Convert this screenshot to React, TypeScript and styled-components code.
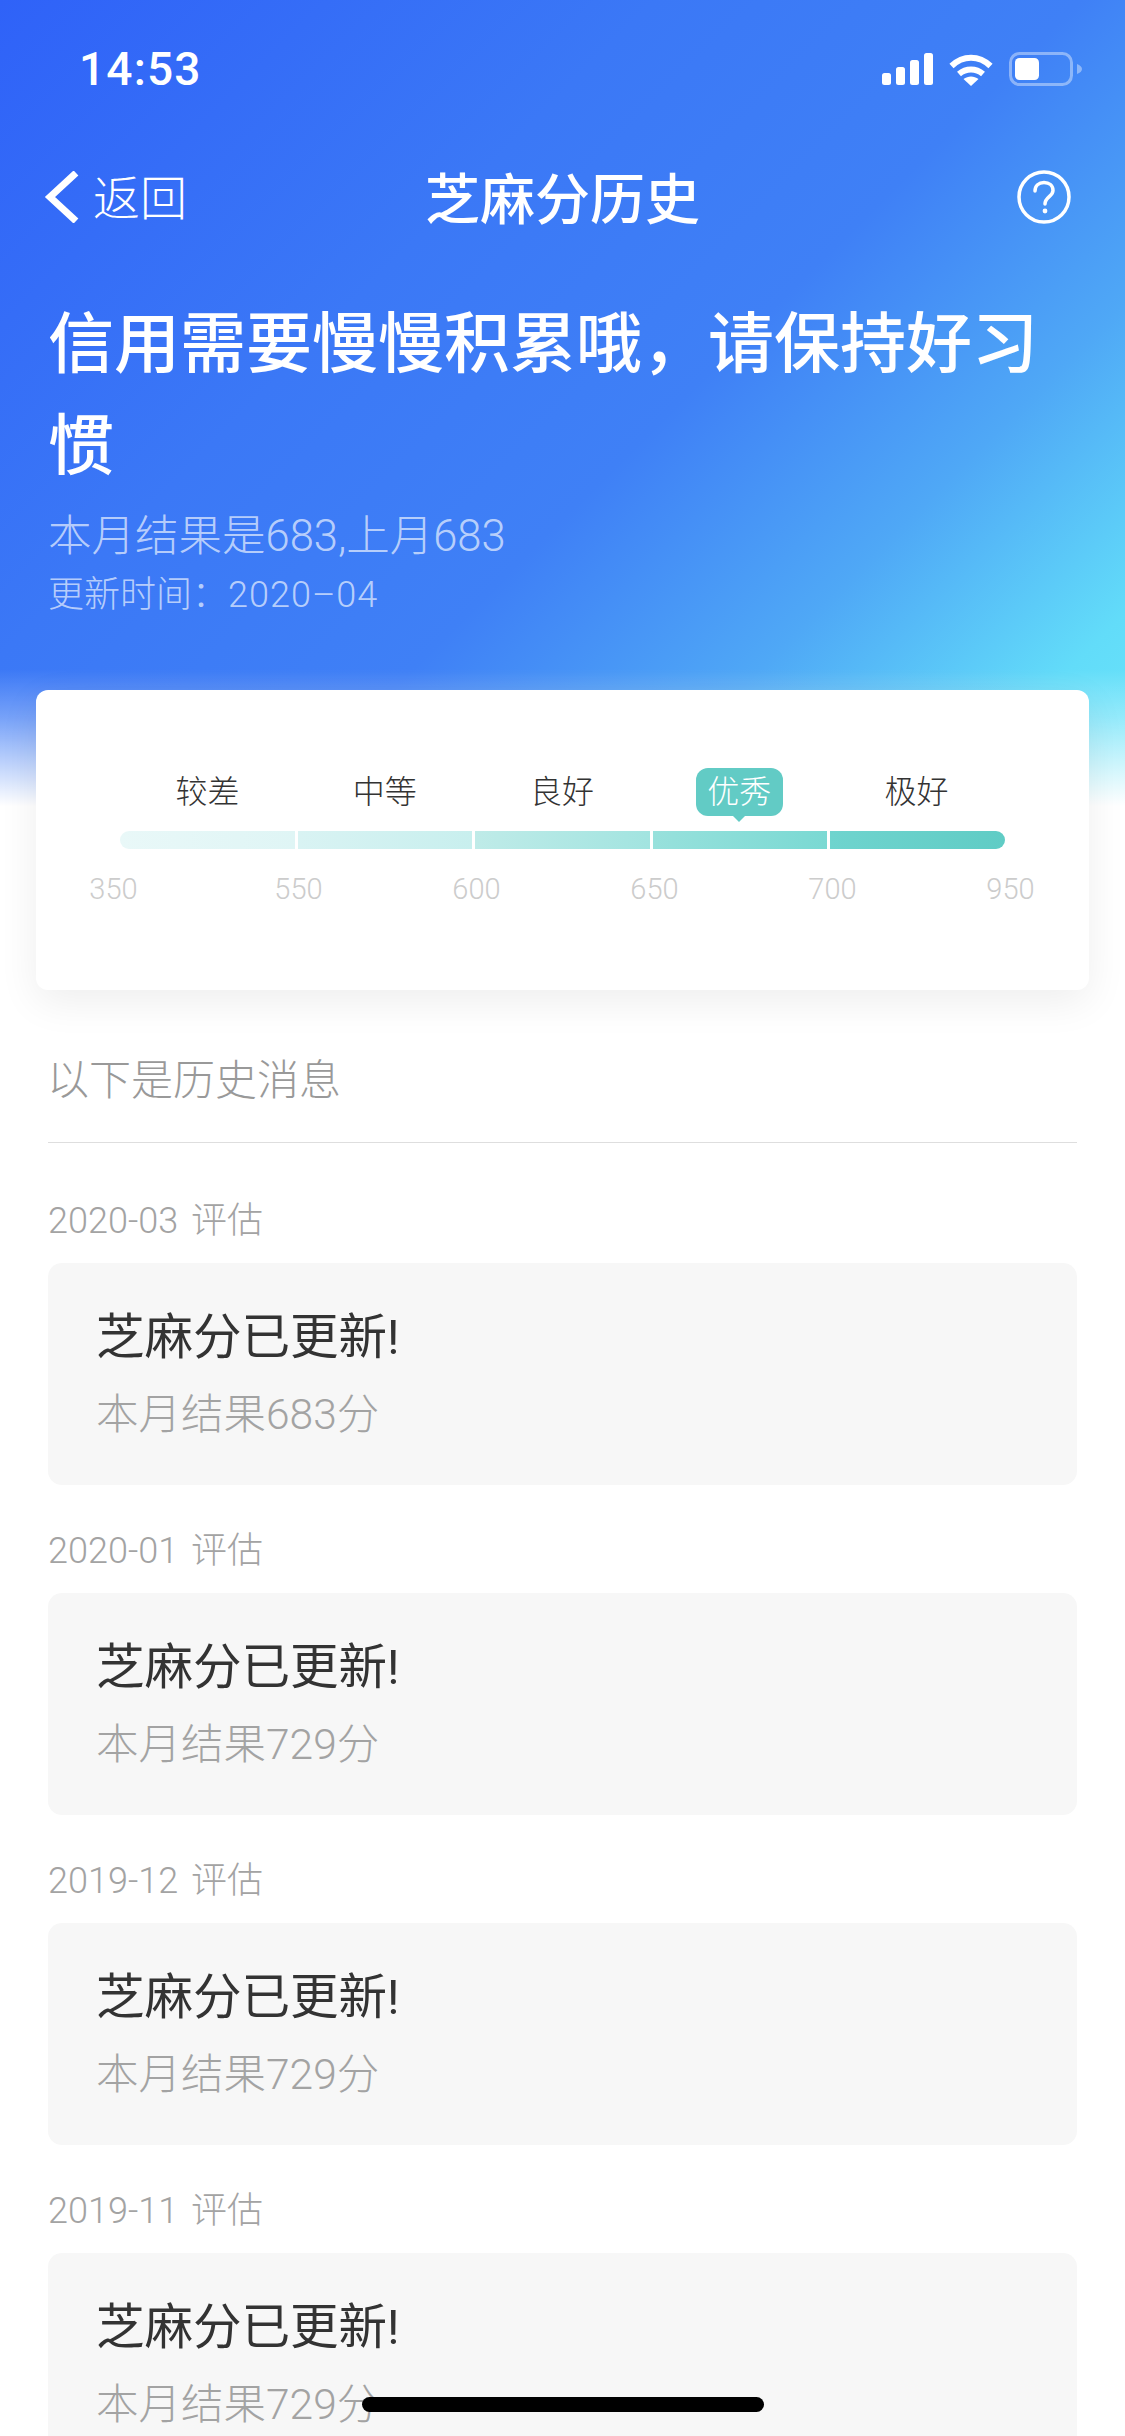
import * as React from "react";
import styled, { createGlobalStyle } from "styled-components";

const GlobalStyle = createGlobalStyle`
  html, body {
    margin: 0;
    padding: 0;
    background: #fff;
  }
  * {
    box-sizing: border-box;
  }
`;

const SPage = styled.div`
  position: relative;
  width: 1125px;
  height: 2436px;
  overflow: hidden;
  background: #fff;
  font-family: Roboto, "Noto Sans CJK SC", sans-serif;
`;

const SHero = styled.header`
  height: 806px;
  color: #fff;
  background:
    linear-gradient(to bottom, rgba(255, 255, 255, 0) 83%, rgba(255, 255, 255, 0.3) 89%, #fff 100%),
    linear-gradient(135deg, #2f62f8 0%, #3b78f6 34%, #3f80f6 56%, #4fa8f6 74%, #62dcf9 90%, #6ae6fa 100%);
`;

const SStatusBar = styled.div`
  height: 136px;
  padding: 46px 43px 0 79px;
  display: flex;
  justify-content: space-between;
  align-items: flex-start;
`;

const STime = styled.div`
  font-size: 46px;
  line-height: 46px;
  font-weight: 500;
  letter-spacing: 1.2px;
`;

const SStatusIcons = styled.div`
  display: flex;
  align-items: center;
  gap: 16px;
  height: 46px;
`;

const SNav = styled.nav`
  height: 122px;
  padding: 0 54px 0 44px;
  display: grid;
  grid-template-columns: 1fr auto 1fr;
  align-items: center;
`;

const SBack = styled.div`
  display: flex;
  align-items: center;
  gap: 13px;
  font-size: 47px;
  font-weight: 300;
`;

const SBackText = styled.span`
  padding-bottom: 5px;
`;

const SNavTitle = styled.div`
  margin-left: 10px;
  padding-bottom: 5px;
  font-size: 55px;
  font-weight: 500;
`;

const SHelp = styled.div`
  display: flex;
  justify-content: flex-end;
`;

const SHeadline = styled.div`
  padding: 36px 48px 0;
`;

const STitle = styled.h1`
  margin: 0;
  font-size: 66px;
  line-height: 102px;
  font-weight: 500;
`;

const SResult = styled.div`
  margin-top: 11px;
  font-size: 43.5px;
  line-height: 56px;
  font-weight: 300;
  color: rgba(255, 255, 255, 0.65);
`;

const SUpdated = styled.div`
  margin-top: 5px;
  font-size: 36px;
  line-height: 50px;
  font-weight: 300;
  color: rgba(255, 255, 255, 0.65);
`;

const SUpdatedDate = styled.span`
  letter-spacing: 1px;
`;

const SScoreCard = styled.section`
  height: 300px;
  margin: -116px 36px 0;
  padding: 78px 84px 0;
  border-radius: 12px;
  background: #fff;
  box-shadow: 0 12px 40px rgba(0, 0, 0, 0.07);
`;

const SLevels = styled.div`
  display: grid;
  grid-template-columns: repeat(5, 1fr);
  margin-left: -1px;
  height: 48px;
  align-items: center;
  justify-items: center;
`;

const SLevel = styled.div<{ $active?: boolean }>`
  position: relative;
  width: 87px;
  height: 48px;
  line-height: 48px;
  text-align: center;
  font-size: 32px;
  font-weight: 300;
  border-radius: 12px;
  color: ${(p) => (p.$active ? "#fff" : "#333")};
  background: ${(p) => (p.$active ? "#62cbc5" : "transparent")};

  ${(p) =>
    p.$active &&
    `
    &::after {
      content: "";
      position: absolute;
      left: 50%;
      bottom: -6px;
      margin-left: -6px;
      border-left: 6px solid transparent;
      border-right: 6px solid transparent;
      border-top: 6px solid #62cbc5;
    }
  `}
`;

const SBar = styled.div`
  display: flex;
  gap: 3px;
  height: 18px;
  margin-top: 15px;
  border-radius: 9px;
  overflow: hidden;
`;

const SSegment = styled.div<{ $from: string; $to: string }>`
  flex: 1;
  background: linear-gradient(to right, ${(p) => p.$from}, ${(p) => p.$to});
`;

const STicks = styled.div`
  display: flex;
  gap: 129px;
  margin: 24px 0 0 -31px;
`;

const STick = styled.div`
  flex: 0 0 49px;
  text-align: center;
  font-size: 29px;
  line-height: 32px;
  font-weight: 300;
  color: #ccc;

  &:first-child {
    margin-right: 7px;
  }
`;

const SHistory = styled.section`
  padding: 0 48px;
`;

const SHistoryTitle = styled.div`
  margin-top: 62px;
  padding: 0 0 32px;
  border-bottom: 1px solid #dedede;
  font-size: 42px;
  line-height: 58px;
  font-weight: 300;
  text-indent: -1px;
  color: #999;
`;

const SGroups = styled.div`
  display: flex;
  flex-direction: column;
  gap: 44px;
  padding-top: 56px;
`;

const SPeriod = styled.div`
  height: 44px;
  margin-bottom: 20px;
  font-size: 36px;
  line-height: 44px;
  font-weight: 300;
  word-spacing: 4px;
  color: #a3a3a3;
`;

const SMessage = styled.div`
  height: 222px;
  padding: 43px 48px 0;
  border-radius: 14px;
  background: #f7f7f7;
`;

const SMessageTitle = styled.div`
  font-size: 48.5px;
  line-height: 64px;
  font-weight: 400;
  color: #333;
`;

const SMessageText = styled.div`
  margin-top: 17px;
  font-size: 42.5px;
  line-height: 56px;
  font-weight: 300;
  color: #a3a3a3;
`;

const SHomeIndicator = styled.div`
  position: absolute;
  left: 362px;
  top: 2397px;
  width: 402px;
  height: 15px;
  border-radius: 8px;
  background: #000;
`;

const levels = ["较差", "中等", "良好", "优秀", "极好"];
const ticks = ["350", "550", "600", "650", "700", "950"];
const segments = [
  ["#e9f8f8", "#dff5f5"],
  ["#d9f3f3", "#c8efee"],
  ["#bfebe8", "#a2e4e0"],
  ["#98e1dc", "#7ad9d3"],
  ["#6fd4ce", "#60ccc5"]
];
const history = [
  { period: "2020-03", score: 683 },
  { period: "2020-01", score: 729 },
  { period: "2019-12", score: 729 },
  { period: "2019-11", score: 729 }
];

const SignalIcon = () => (
  <svg width="51" height="32" viewBox="0 0 51 32" fill="#fff">
    <rect x="0" y="20" width="9" height="12" rx="2.5" />
    <rect x="14" y="14" width="9" height="18" rx="2.5" />
    <rect x="28" y="7" width="9" height="25" rx="2.5" />
    <rect x="42" y="0" width="9" height="32" rx="2.5" />
  </svg>
);

const WifiIcon = () => (
  <svg width="44" height="33" viewBox="0 0 44 33" fill="none" stroke="#fff" strokeWidth="6">
    <path d="M2.5 13C14 2 30 2 41.5 13" />
    <path d="M10 21C17 15 27 15 34 21" />
    <path d="M22 33L14.5 26C19 22.5 25 22.5 29.5 26Z" fill="#fff" stroke="none" />
  </svg>
);

const BatteryIcon = () => (
  <svg width="73" height="34" viewBox="0 0 73 34" fill="none">
    <rect x="1.5" y="1.5" width="61" height="31" rx="9" stroke="#fff" strokeOpacity="0.4" strokeWidth="3" />
    <rect x="6" y="6" width="24" height="22" rx="4.5" fill="#fff" />
    <path d="M68 12C71 13 73 15 73 17C73 19 71 21 68 22Z" fill="#fff" fillOpacity="0.4" />
  </svg>
);

const BackIcon = () => (
  <svg width="36" height="52" viewBox="0 0 36 52" fill="none" stroke="#fff" strokeWidth="7">
    <path d="M32 2L6 26L32 50" />
  </svg>
);

const HelpIcon = () => (
  <svg width="54" height="54" viewBox="0 0 54 54" fill="none" stroke="#fff" strokeWidth="3.5">
    <circle cx="27" cy="27" r="25" />
    <path d="M18 21C18 15.5 22 12.5 27 12.5C32 12.5 36 15.5 36 20.5C36 26.5 28 27 28 34" strokeLinecap="round" />
    <circle cx="28" cy="41" r="2.4" fill="#fff" stroke="none" />
  </svg>
);

const App = () => {
  return (
    <SPage>
      <GlobalStyle />
      <SHero>
        <SStatusBar>
          <STime>14:53</STime>
          <SStatusIcons>
            <SignalIcon />
            <WifiIcon />
            <BatteryIcon />
          </SStatusIcons>
        </SStatusBar>
        <SNav>
          <SBack>
            <BackIcon />
            <SBackText>返回</SBackText>
          </SBack>
          <SNavTitle>芝麻分历史</SNavTitle>
          <SHelp>
            <HelpIcon />
          </SHelp>
        </SNav>
        <SHeadline>
          <STitle>信用需要慢慢积累哦，请保持好习惯</STitle>
          <SResult>本月结果是683,上月683</SResult>
          <SUpdated>
            更新时间：<SUpdatedDate>2020–04</SUpdatedDate>
          </SUpdated>
        </SHeadline>
      </SHero>
      <SScoreCard>
        <SLevels>
          {levels.map((level) => (
            <SLevel key={level} $active={level === "优秀"}>
              {level}
            </SLevel>
          ))}
        </SLevels>
        <SBar>
          {segments.map(([from, to]) => (
            <SSegment key={from} $from={from} $to={to} />
          ))}
        </SBar>
        <STicks>
          {ticks.map((tick) => (
            <STick key={tick}>{tick}</STick>
          ))}
        </STicks>
      </SScoreCard>
      <SHistory>
        <SHistoryTitle>以下是历史消息</SHistoryTitle>
        <SGroups>
          {history.map((item) => (
            <div key={item.period}>
              <SPeriod>{item.period} 评估</SPeriod>
              <SMessage>
                <SMessageTitle>芝麻分已更新!</SMessageTitle>
                <SMessageText>本月结果{item.score}分</SMessageText>
              </SMessage>
            </div>
          ))}
        </SGroups>
      </SHistory>
      <SHomeIndicator />
    </SPage>
  );
};

export default App;
